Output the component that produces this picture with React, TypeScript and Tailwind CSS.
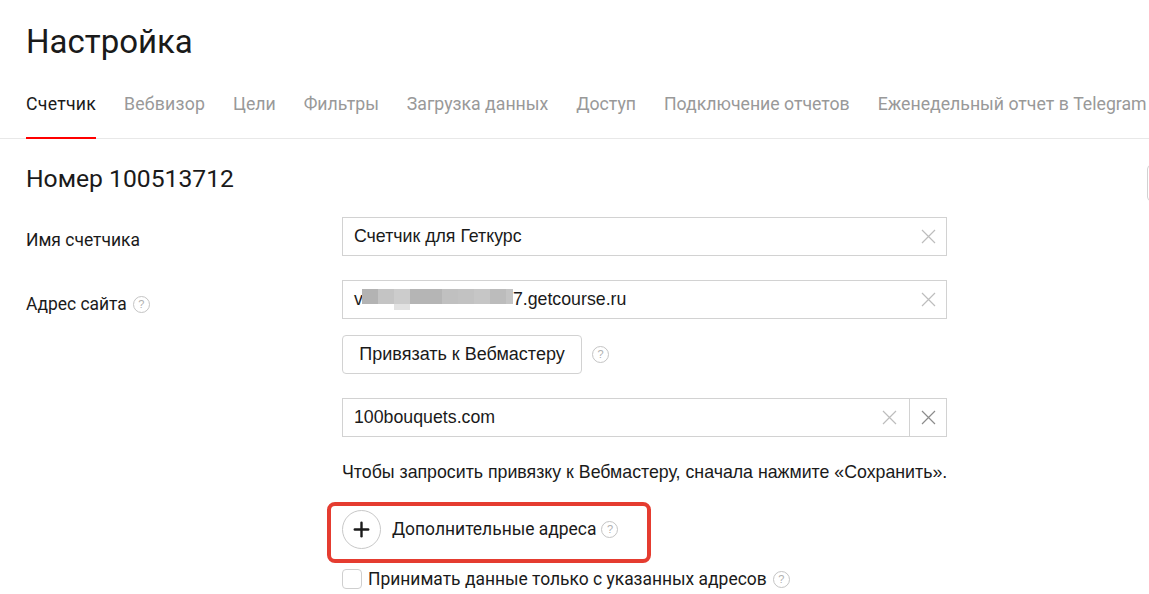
import { Plus } from 'lucide-react';

const tabs = ['Цели', 'Фильтры', 'Загрузка данных', 'Доступ', 'Подключение отчетов', 'Еженедельный отчет в Telegram'];

const blurCells = ['#b3b3b3', '#c4c4c4', '#cccccc', '#b5b5b5', '#b5b5b5', '#c0c0c0', '#c2c2c2', '#c6c6c6', '#bcbcbc', '#c4c4c4'];

function Help({ className = '' }: { className?: string }) {
  return (
    <span className={`inline-flex h-[17px] w-[17px] shrink-0 items-center justify-center rounded-full border border-[#c4c4c4] font-['Liberation_Sans',sans-serif] text-[11px] leading-none text-[#b0b0b0] ${className}`}>
      ?
    </span>
  );
}

function Cross({ dark = false }: { dark?: boolean }) {
  return (
    <svg width="15" height="15" viewBox="0 0 15 15" fill="none" stroke={dark ? '#8c8c8c' : '#bdbdbd'} strokeWidth="1.2">
      <path d="M1 1l13 13M14 1L1 14" />
    </svg>
  );
}

function Field({ children, className = '' }: { children: React.ReactNode; className?: string }) {
  return (
    <div className={`relative flex h-[39px] w-[605px] items-center justify-between border border-[#d2d2d2] pl-[11px] pr-[10px] font-['Liberation_Sans',sans-serif] text-[17.75px] text-[#1a1a1a] ${className}`}>
      {children}
    </div>
  );
}

export default function App() {
  return (
    <div className="relative h-[594px] w-[1149px] overflow-hidden bg-white font-['Liberation_Sans',sans-serif]">
      {/* Header */}
      <h1 className="pl-[26px] pt-[22px] font-['Roboto',sans-serif] text-[33px] font-normal leading-[40px] text-[#1a1a1a]">Настройка</h1>

      {/* Tabs */}
      <div className="mt-[20px] flex h-[57px] gap-[27.9px] whitespace-nowrap border-b border-[#e8e8e8] pl-[26px] font-['Roboto',sans-serif] text-[17.7px]">
        <div className="h-[57px] border-b-2 border-[#ff0000] pt-[10px] leading-[24px] tracking-[0.25px] text-[#1a1a1a]">Счетчик</div>
        <div className="pt-[10px] leading-[24px] tracking-[0.2px] text-[#999999]">Вебвизор</div>
        {tabs.map((tab) => (
          <div key={tab} className="pt-[10px] leading-[24px] text-[#999999]">{tab}</div>
        ))}
      </div>

      <h2 className="pl-[26px] pt-[24px] font-['Roboto',sans-serif] text-[24.7px] font-normal leading-[32px] text-[#1a1a1a]">Номер 100513712</h2>

      {/* Form */}
      <div className="mt-[22px] grid grid-cols-[316px_1fr] pl-[26px] font-['Roboto',sans-serif] text-[17.45px] text-[#1a1a1a]">
        <div className="pt-[11px] leading-[24px]">Имя счетчика</div>
        <Field>
          <span>Счетчик для Геткурс</span>
          <Cross />
        </Field>

        <div className="mt-[36px] flex h-[24px] items-center gap-[6px] leading-[24px]">
          Адрес сайта <Help />
        </div>
        <div className="mt-[24px] flex flex-col items-start">
          <Field>
            <span>
              v<span className="inline-block w-[150px]" />7.getcourse.ru
            </span>
            <Cross />
            <div className="absolute left-[19px] top-[8px] flex">
              {blurCells.map((color, i) => (
                <div key={i} className={i === 9 ? 'h-[15px] w-[7px]' : 'h-[15px] w-[16px]'} style={{ backgroundColor: color }}>
                  {i === 2 && <div className="mt-[15px] h-[6px] w-[16px] bg-[#e2e2e2]" />}
                </div>
              ))}
            </div>
          </Field>

          <div className="mt-[16px] flex items-center gap-[10px]">
            <button className="h-[39px] w-[240px] rounded-[4px] border border-[#d2d2d2] bg-white font-['Liberation_Sans',sans-serif] text-[18px] text-[#1a1a1a]">Привязать к Вебмастеру</button>
            <Help />
          </div>

          <Field className="mt-[24px] !pr-0">
            <span>100bouquets.com</span>
            <div className="flex h-full items-center">
              <div className="mr-[12px]"><Cross /></div>
              <div className="flex h-full w-[37px] items-center justify-center border-l border-[#d2d2d2]"><Cross dark /></div>
            </div>
          </Field>

          <p className="mt-[24px] whitespace-nowrap font-['Liberation_Sans',sans-serif] text-[17.75px] leading-[22px]">
            Чтобы запросить привязку к Вебмастеру, сначала нажмите «Сохранить».
          </p>

          <div className="relative mt-[27px] flex items-center">
            <div className="flex h-[39px] w-[39px] items-center justify-center rounded-full border border-[#c8c8c8]">
              <Plus size={23} strokeWidth={2.5} color="#1a1a1a" />
            </div>
            <span className="ml-[11px]">Дополнительные адреса</span>
            <Help className="ml-[5px]" />
            {/* red highlight drawn over the screenshot */}
            <div className="absolute left-[-15px] top-[-8px] h-[61px] w-[324px] rounded-[8px] border-[4.5px] border-[#e53c30]" />
          </div>

          <div className="mt-[20px] flex items-center gap-[6px]">
            <div className="h-[20px] w-[20px] rounded-[4px] border border-[#cfcfcf]" />
            <span className="leading-[20px]">Принимать данные только с указанных адресов</span>
            <Help />
          </div>
        </div>
      </div>

      {/* clipped panel on the right edge */}
      <div className="absolute left-[1147px] top-[165px] h-[36px] w-[20px] rounded-[4px] border border-[#d2d2d2]" />
    </div>
  );
}
